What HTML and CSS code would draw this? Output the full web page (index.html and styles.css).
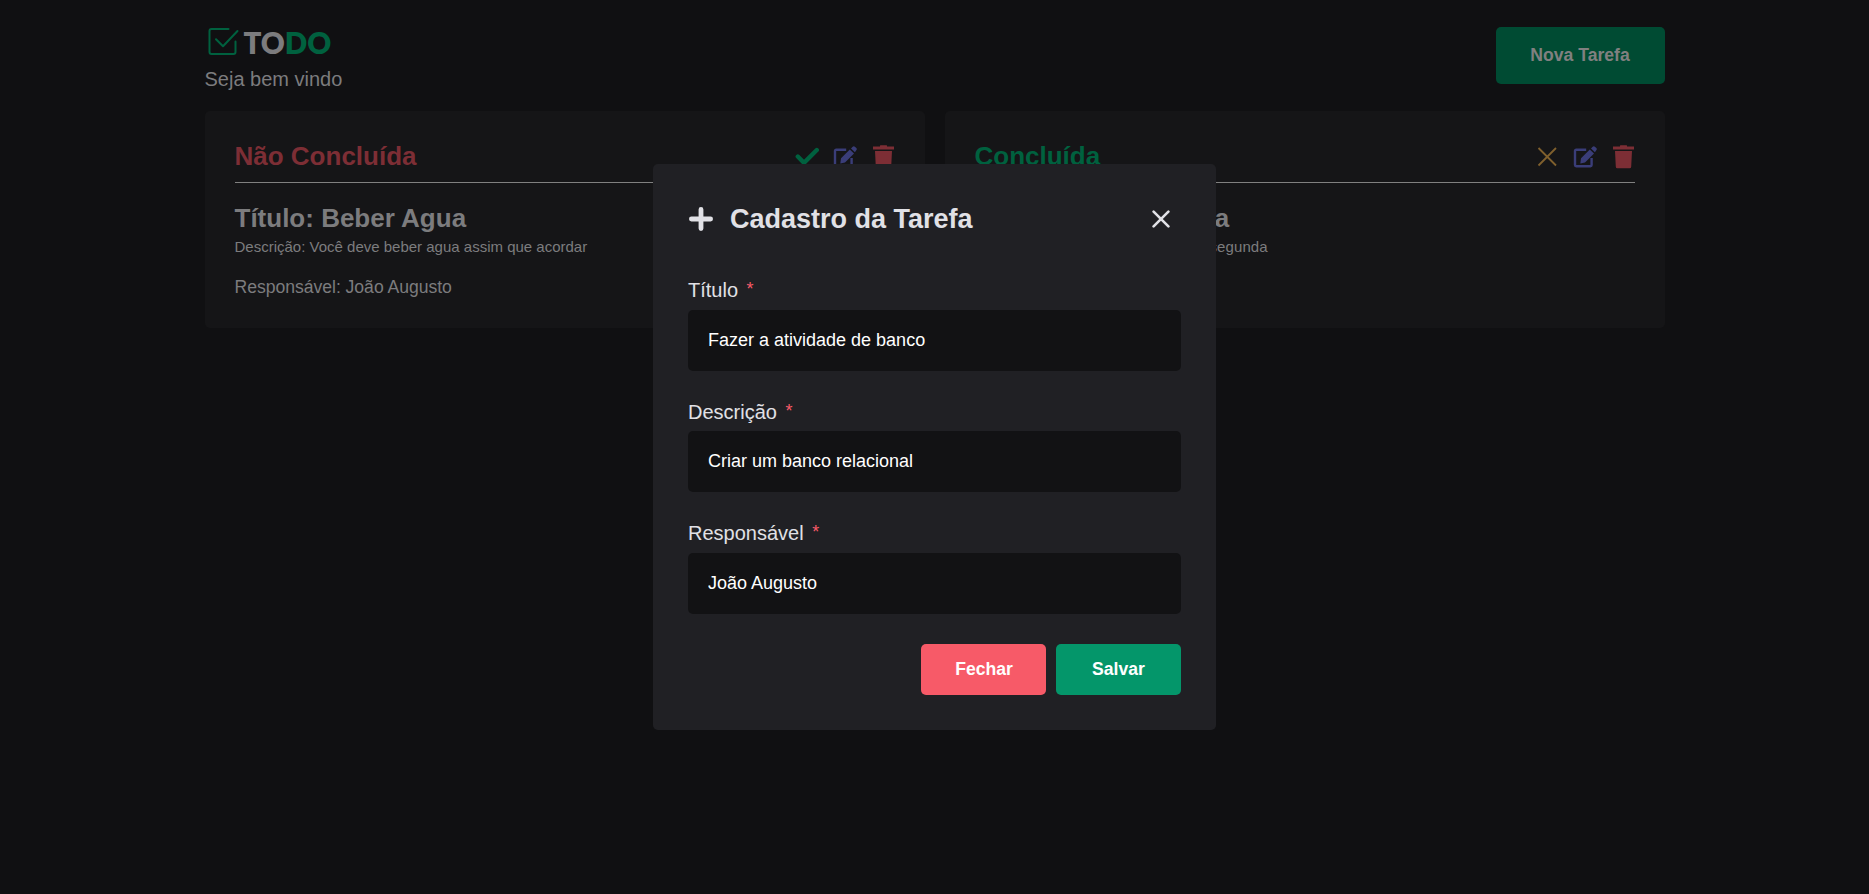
FILE: index.html
```html
<!DOCTYPE html>
<html lang="pt-BR">
<head>
<meta charset="utf-8">
<title>TODO</title>
<link rel="stylesheet" href="styles.css">
</head>
<body>
<svg class="defs" width="0" height="0">
  <symbol id="edit" viewBox="0 0 24 24"><path fill="none" stroke="currentColor" stroke-width="2.400" d="M13.200 4.700H3.200a1.200 1.200 0 0 0-1.200 1.200V20a1.200 1.200 0 0 0 1.200 1.200h14.200a1.200 1.200 0 0 0 1.200-1.200V13"/><path fill="currentColor" d="M8 13.300 16.800 4.400l4.200 4.200-9 9-4.700.8zM18 3.400l1.700-1.700c.7-.7 1.500-.7 2.200 0l1.400 1.400c.7.7.7 1.500 0 2.200L21.900 7.200z"/></symbol>
  <symbol id="trash" viewBox="0 0 21 24"><path fill="currentColor" d="M0 1.500h7V.8q0-.5.5-.5h6q.5 0 .5.500v.7h7v3H0zM2 6h17l-.8 15.800q-.1 1.500-1.500 1.500H4.300q-1.400 0-1.500-1.500z"/></symbol>
</svg>
<div class="container">
  <header class="header">
    <div>
      <div class="logo">
        <svg width="31" height="29" viewBox="0 0 31 29" fill="none" stroke="currentColor" stroke-width="2" stroke-linecap="round" stroke-linejoin="round"><path d="M20.500 2H3.500Q1.500 2 1.500 4v21q0 2 2 2h22q2 0 2-2V14.500M8 12.300l7 7L29.500 4"/></svg>
        <span class="logo-text">TO<b>DO</b></span>
      </div>
      <p class="welcome">Seja bem vindo</p>
    </div>
    <button class="new">Nova Tarefa</button>
  </header>
  <main class="cards">
    <section class="card">
      <div class="card-head">
        <h2 class="red">Não Concluída</h2>
        <div class="actions">
          <svg class="green" width="24" height="24" viewBox="0 0 24 24"><path fill="none" stroke="currentColor" stroke-width="4.400" stroke-linecap="round" d="m2.800 11.500 6.200 6.300L21.800 5"/></svg>
          <svg class="blue" width="24" height="24"><use href="#edit"/></svg>
          <svg class="red trash" width="21" height="24"><use href="#trash"/></svg>
        </div>
      </div>
      <h2>Título: Beber Agua</h2>
      <p class="description">Descrição: Você deve beber agua assim que acordar</p>
      <p class="owner">Responsável: João Augusto</p>
    </section>
    <section class="card">
      <div class="card-head">
        <h2 class="green">Concluída</h2>
        <div class="actions">
          <svg class="gold" width="24" height="24" viewBox="0 0 24 24"><path fill="none" stroke="currentColor" stroke-width="1.800" d="m3.500 3 17.500 17.500M21 3 3.500 20.500"/></svg>
          <svg class="blue" width="24" height="24"><use href="#edit"/></svg>
          <svg class="red trash" width="21" height="24"><use href="#trash"/></svg>
        </div>
      </div>
      <h2 class="wide">Título: Lavar a louça</h2>
      <p class="description wide">Descrição: Você deve começar na segunda</p>
      <p class="owner">Responsável: João Augusto</p>
    </section>
  </main>
</div>
<div class="overlay">
  <form class="modal">
    <div class="modal-head">
      <svg width="24" height="24" viewBox="0 0 24 24" fill="none" stroke="currentColor" stroke-width="4.800" stroke-linecap="round"><path d="M12 2.400v19.200M2.400 12h19.200"/></svg>
      <h1>Cadastro da Tarefa</h1>
      <svg class="close" width="18" height="18" viewBox="0 0 18 18" fill="none" stroke="currentColor" stroke-width="2.600" stroke-linecap="round"><path d="m1.600 1.600 14.800 14.800m0-14.800L1.600 16.400"/></svg>
    </div>
    <label class="field"><span>Título <i>*</i></span><input value="Fazer a atividade de banco"></label>
    <label class="field compact"><span>Descrição <i>*</i></span><input value="Criar um banco relacional"></label>
    <label class="field"><span>Responsável <i>*</i></span><input value="João Augusto"></label>
    <div class="buttons">
      <button type="button" class="cancel">Fechar</button>
      <button type="button" class="save">Salvar</button>
    </div>
  </form>
</div>
</body>
</html>
```
FILE: styles.css
```css
* { box-sizing: border-box; margin: 0; padding: 0; }
body { height: 894px; overflow: hidden; background: #101012; color: #7c7c7e; font-family: "Liberation Sans", Arial, sans-serif; }
.defs { position: absolute; }
svg { display: block; flex: none; }
button { border: 0; border-radius: 5px; font: bold 17.6px "Liberation Sans", Arial, sans-serif; }
.container { width: 1460px; margin: 0 auto; padding-top: 27px; }
.header { display: flex; justify-content: space-between; height: 84px; }
.logo { display: flex; height: 29px; padding-left: 3px; color: #00613f; }
.logo-text { margin-left: 5px; font: 800 29.500px/31px Lato, sans-serif; letter-spacing: -.1px; color: #7c7c7e; }
.logo-text b { font-weight: 800; color: #00613f; }
.welcome { margin-top: 12px; font-size: 20px; line-height: 23px; }
.new { width: 169px; height: 57px; background: #004b33; color: #808080; }
.cards { display: grid; grid-template-columns: 1fr 1fr; gap: 20px; }
.card { height: 217px; padding: 30px; border-radius: 5px; background: #151517; }
.card-head { display: flex; justify-content: space-between; height: 42px; margin-bottom: 20px; border-bottom: 1px solid #808080; }
h2 { font-size: 26px; line-height: 30px; }
.actions { display: flex; gap: 14px; padding-top: 4px; }
.trash { margin-left: 2px; margin-right: 1px; }
.red { color: #7d2e35; }
.green { color: #00613f; }
.blue { color: #3a3d78; }
.gold { color: #80602d; }
.description { margin-top: 5px; font-size: 15px; line-height: 17px; }
.wide { letter-spacing: .1px; }
.owner { margin-top: 22px; font-size: 17.600px; line-height: 20px; letter-spacing: -.03px; }
.overlay { position: fixed; inset: 0; display: flex; justify-content: center; align-items: flex-start; padding-top: 164px; }
.modal { width: 563px; height: 566px; padding: 35px; border-radius: 5px; background: #202024; color: #e1e1e6; }
.modal-head { display: flex; align-items: center; height: 40px; padding: 0 11px 0 1px; margin-bottom: 40px; }
h1 { margin-left: 17px; font-size: 27px; line-height: 30px; }
.close { margin-left: auto; }
.field { display: block; height: 121.500px; }
.field span { display: block; height: 31px; font-size: 20px; line-height: 23px; }
.field i { margin-left: 3px; font-style: normal; font-size: 18px; vertical-align: 2px; line-height: 1; color: #f75a68; }
input { display: block; width: 100%; height: 61px; padding: 0 20px 1px; border: 0; border-radius: 5px; background: #121214; color: #fff; font: 18px "Liberation Sans", Arial, sans-serif; }
.compact span { height: 30.500px; }
.compact input { padding-bottom: 0; }
.buttons { display: flex; justify-content: flex-end; gap: 10px; margin-top: .500px; }
.buttons button { width: 125px; height: 51px; color: #fff; }
.cancel { padding-left: 1px; background: #f75a68; }
.save { background: #04966a; }
```
